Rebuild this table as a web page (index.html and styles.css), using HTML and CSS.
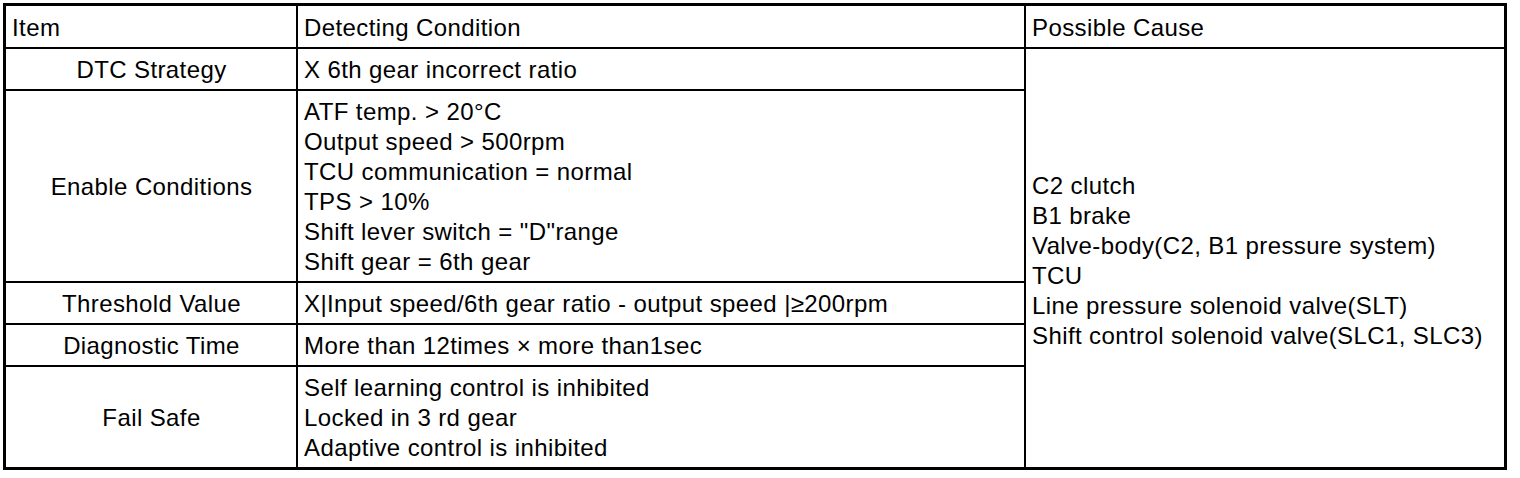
FILE: index.html
```html
<!DOCTYPE html>
<html lang="en">
<head>
<meta charset="utf-8">
<title>DTC table</title>
<link rel="stylesheet" href="styles.css">
</head>
<body>
<table class="dtc">
  <colgroup>
    <col class="c-item">
    <col class="c-cond">
    <col class="c-cause">
  </colgroup>
  <tr class="head">
    <th class="item">Item</th>
    <th class="cond">Detecting Condition</th>
    <th class="cause">Possible Cause</th>
  </tr>
  <tr>
    <td class="item">DTC Strategy</td>
    <td class="cond">X 6th gear incorrect ratio</td>
    <td class="cause" rowspan="5">C2 clutch<br>B1 brake<br>Valve-body(C2, B1 pressure system)<br>TCU<br>Line pressure solenoid valve(SLT)<br>Shift control solenoid valve(SLC1, SLC3)</td>
  </tr>
  <tr class="r-enable">
    <td class="item">Enable Conditions</td>
    <td class="cond">ATF temp. &gt; 20°C<br>Output speed &gt; 500rpm<br>TCU communication = normal<br>TPS &gt; 10%<br>Shift lever switch = "D"range<br>Shift gear = 6th gear</td>
  </tr>
  <tr>
    <td class="item">Threshold Value</td>
    <td class="cond">X|Input speed/6th gear ratio - output speed |≥200rpm</td>
  </tr>
  <tr>
    <td class="item">Diagnostic Time</td>
    <td class="cond">More than 12times × more than1sec</td>
  </tr>
  <tr class="last">
    <td class="item">Fail Safe</td>
    <td class="cond">Self learning control is inhibited<br>Locked in 3 rd gear<br>Adaptive control is inhibited</td>
  </tr>
</table>
</body>
</html>
```

FILE: styles.css
```css
html, body {
  margin: 0;
  padding: 0;
  background: #fff;
}

body {
  padding: 3px 0 0 3px;
  font-family: "Liberation Sans", Arial, sans-serif;
  color: #000;
}

.dtc {
  border: 3px solid #000;
  border-collapse: separate;
  border-spacing: 0;
  width: 1504px;
  table-layout: fixed;
  font-size: 24px;
  letter-spacing: 0.4px;
  line-height: 30px;
}

.c-item { width: 292px; }
.c-cond { width: 728px; }
.c-cause { width: 478px; }

.dtc th,
.dtc td {
  font-weight: normal;
  padding: 6px 5px 4px 6px;
  border-right: 2px solid #000;
  border-bottom: 2px solid #000;
  vertical-align: middle;
  white-space: nowrap;
}

.dtc .head th {
  text-align: left;
  padding-top: 7px;
  padding-bottom: 4px;
}

.dtc td.item {
  text-align: center;
}

.dtc td.cond {
  text-align: left;
}

.dtc .cause {
  border-right: none;
  text-align: left;
}

.dtc td.cause {
  border-bottom: none;
  padding-top: 8px;
  padding-bottom: 2px;
}

.dtc .last td {
  border-bottom: none;
}
```
